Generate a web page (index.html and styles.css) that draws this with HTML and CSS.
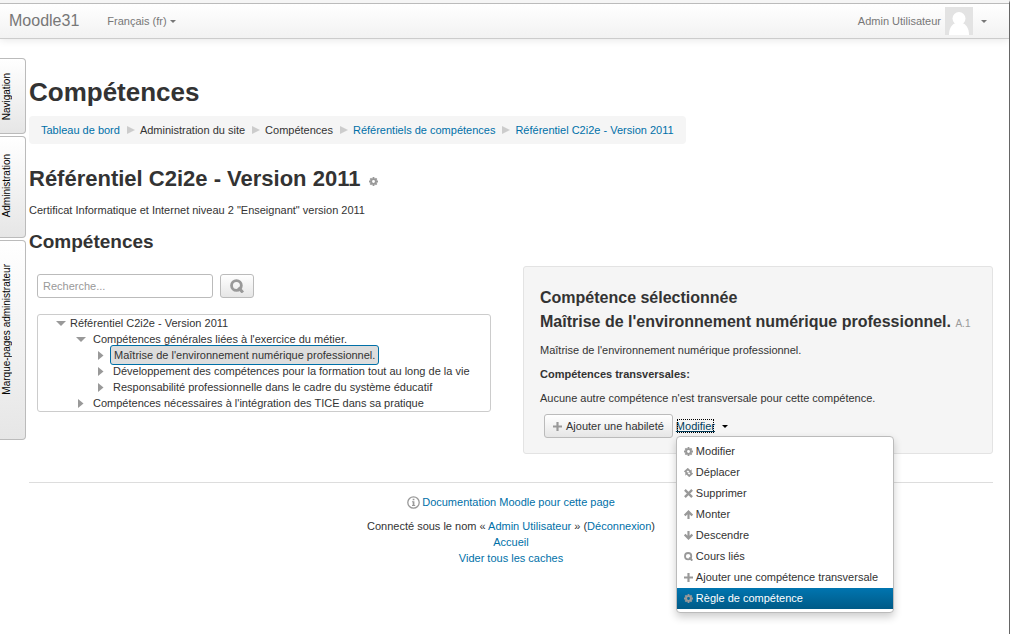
FILE: index.html
```html
<!DOCTYPE html>
<html lang="fr">
<head>
<meta charset="utf-8">
<title>Compétences</title>
<link rel="stylesheet" href="styles.css">
</head>
<body>
<svg class="symbols" aria-hidden="true">
  <symbol id="gear" viewBox="0 0 10 10"><path fill="#999" fill-rule="evenodd" d="M4 0h2v1.300l.8.3.9-.9 1.600 1.600-.9.9.3.8H10v2H8.700l-.3.8.9.9-1.600 1.600-.9-.9-.8.3V10H4V8.700l-.8-.3-.9.9L.7 7.700l.9-.9-.3-.8H0V4h1.300l.3-.8-.9-.9L2.300.7l.9.9.8-.3zM5 3.400a1.600 1.600 0 1 0 0 3.200 1.600 1.600 0 0 0 0-3.200z"/></symbol>
  <symbol id="move" viewBox="0 0 10 10"><path fill="none" stroke="#999" stroke-width="2" d="M3.400 5.400 1.400 3.800 4.200 1.200 7.600 4.400M6.600 4.600l2 1.600-2.800 2.600L2.400 5.600"/><path fill="#999" d="M4.800 5h3.700V1.500zM5.200 5H1.500v3.500z"/></symbol>
  <symbol id="cross" viewBox="0 0 10 10"><path stroke="#999" stroke-width="2.600" d="m1 1 8 8M9 1 1 9"/></symbol>
  <symbol id="up" viewBox="0 0 10 10"><path fill="none" stroke="#999" stroke-width="2.400" d="M5 10V2M.8 6 5 1.800 9.200 6"/></symbol>
  <symbol id="down" viewBox="0 0 10 10"><path fill="none" stroke="#999" stroke-width="2.400" d="M5 0v8M.8 4 5 8.200 9.200 4"/></symbol>
  <symbol id="search" viewBox="0 0 10 10"><circle cx="4.600" cy="4.600" r="3.500" fill="none" stroke="#999" stroke-width="2"/><path stroke="#999" stroke-width="2.200" d="m6 6 3.200 3.600"/></symbol>
  <symbol id="plus" viewBox="0 0 10 10"><path stroke="#999" stroke-width="2.400" d="M5 0v10M0 5h10"/></symbol>
</svg>
<header class="navbar">
  <a class="brand" href="#">Moodle31</a>
  <a class="lang" href="#">Français (fr)<i class="caret"></i></a>
  <a class="user" href="#">Admin Utilisateur
    <svg class="avatar" viewBox="0 0 28 28"><rect width="28" height="28" fill="#e3e3e3"/><circle cx="14" cy="11.500" r="6.500" fill="#fff"/><path fill="#fff" d="M4 28c0-7 3-11 7-12h6c4 1 7 5 7 12z"/></svg>
    <i class="caret"></i></a>
</header>
<div class="page">
  <nav class="dock" aria-label="Blocs">
    <button class="dock-tab"><span>Navigation</span></button>
    <button class="dock-tab tab-admin"><span>Administration</span></button>
    <button class="dock-tab tab-marks"><span>Marque-pages administrateur</span></button>
  </nav>
  <main class="content">
    <h1>Compétences</h1>
    <nav class="breadcrumb" aria-label="Fil d'Ariane">
      <a href="#">Tableau de bord</a><i class="sep"></i><span>Administration du site</span><i class="sep"></i><span>Compétences</span><i class="sep"></i><a href="#">Référentiels de compétences</a><i class="sep"></i><a href="#">Référentiel C2i2e - Version 2011</a>
    </nav>
    <h2>Référentiel C2i2e - Version 2011 <a href="#" aria-label="Modifier le référentiel"><svg class="icon"><use href="#gear"/></svg></a></h2>
    <p class="intro">Certificat Informatique et Internet niveau 2 "Enseignant" version 2011</p>
    <h3>Compétences</h3>
    <div class="columns">
      <section class="browser">
        <form class="search">
          <input type="text" placeholder="Recherche..." aria-label="Recherche">
          <button class="btn" type="button" aria-label="Rechercher"><svg class="icon-large"><use href="#search"/></svg></button>
        </form>
        <ul class="tree">
          <li class="level-1"><i class="open"></i><span>Référentiel C2i2e - Version 2011</span></li>
          <li class="level-2"><i class="open"></i><span>Compétences générales liées à l'exercice du métier.</span></li>
          <li class="level-3"><i class="closed"></i><span class="selected">Maîtrise de l'environnement numérique professionnel.</span></li>
          <li class="level-3"><i class="closed"></i><span>Développement des compétences pour la formation tout au long de la vie</span></li>
          <li class="level-3"><i class="closed"></i><span>Responsabilité professionnelle dans le cadre du système éducatif</span></li>
          <li class="level-2"><i class="closed"></i><span>Compétences nécessaires à l'intégration des TICE dans sa pratique</span></li>
        </ul>
      </section>
      <section class="well">
        <h4>Compétence sélectionnée</h4>
        <h4>Maîtrise de l'environnement numérique professionnel. <small>A.1</small></h4>
        <p>Maîtrise de l'environnement numérique professionnel.</p>
        <p class="label">Compétences transversales:</p>
        <p>Aucune autre compétence n'est transversale pour cette compétence.</p>
        <div class="actions">
          <button class="btn" type="button"><svg class="icon"><use href="#plus"/></svg>Ajouter une habileté</button>
          <div class="dropdown">
            <a class="toggle" href="#"><span>Modifier</span><i class="caret"></i></a>
            <ul class="menu">
              <li><a href="#"><svg class="icon"><use href="#gear"/></svg>Modifier</a></li>
              <li><a href="#"><svg class="icon"><use href="#move"/></svg>Déplacer</a></li>
              <li><a href="#"><svg class="icon"><use href="#cross"/></svg>Supprimer</a></li>
              <li><a href="#"><svg class="icon"><use href="#up"/></svg>Monter</a></li>
              <li><a href="#"><svg class="icon"><use href="#down"/></svg>Descendre</a></li>
              <li><a href="#"><svg class="icon"><use href="#search"/></svg>Cours liés</a></li>
              <li><a href="#"><svg class="icon"><use href="#plus"/></svg>Ajouter une compétence transversale</a></li>
              <li><a class="active" href="#"><svg class="icon"><use href="#gear"/></svg>Règle de compétence</a></li>
            </ul>
          </div>
        </div>
      </section>
    </div>
    <footer>
      <p><a class="doc" href="#"><svg class="info" viewBox="0 0 13 13"><circle cx="6.500" cy="6.500" r="5.700" fill="none" stroke="#999" stroke-width="1.300"/><path fill="#999" d="M5.700 2.700h1.700v1.500H5.700zM5 5.200h2.400v3.900H8.200v1H5v-1h.7V6.200H5z"/></svg>Documentation Moodle pour cette page</a></p>
      <div>Connecté sous le nom « <a href="#">Admin Utilisateur</a> » (<a href="#">Déconnexion</a>)</div>
      <div><a href="#">Accueil</a></div>
      <div><a href="#">Vider tous les caches</a></div>
    </footer>
  </main>
</div>
</body>
</html>
```
FILE: styles.css
```css
* { box-sizing: border-box; }
body {
  margin: 0;
  min-height: 100vh;
  border-top: 3px solid #f5f5f5;
  border-right: 1px solid #666;
  background: #fff;
  color: #333;
  font: 11px/16px "Liberation Sans", Arial, sans-serif;
}
a { color: #0070a8; text-decoration: none; }
button, input { font: inherit; color: inherit; }
h1, h2, h3, h4, p, ul { margin: 0; padding: 0; }
ul { list-style: none; }
.symbols { position: absolute; width: 0; height: 0; }
.icon { width: 9px; height: 9px; flex: none; }
.icon-large { width: 14px; height: 14px; }
.caret {
  display: inline-block;
  border: 3px solid transparent;
  border-top-color: currentColor;
  border-bottom: 0;
}

.navbar {
  display: flex;
  align-items: center;
  height: 36px;
  padding: 0 22px 0 9px;
  border-top: 1px solid #bbb;
  border-bottom: 1px solid #ccc;
  background: linear-gradient(#fff, #f2f2f2);
  box-shadow: 0 1px 8px rgba(0, 0, 0, .1);
}
.navbar a { color: #777; }
.navbar .brand { font-size: 16px; }
.lang { display: flex; align-items: center; gap: 3px; margin-left: 28px; }
.user { display: flex; align-items: center; gap: 4px; margin-left: auto; }
.user .caret { margin-left: 4px; }
.avatar { width: 28px; height: 28px; }

.page { display: flex; }
.dock { display: flex; flex-direction: column; gap: 2px; width: 29px; flex: none; padding-top: 19px; }
.dock-tab {
  display: flex;
  align-items: flex-start;
  width: 26px;
  height: 76px;
  padding: 14px 0 0 1px;
  border: 1px solid #bbb;
  border-left: 0;
  border-radius: 0 4px 4px 0;
  background: linear-gradient(#fff, #e6e6e6);
  font-size: 10px;
  line-height: 12px;
  color: #000;
}
.dock-tab span { writing-mode: vertical-rl; transform: rotate(180deg); }
.tab-admin { height: 102px; padding-top: 17px; }
.tab-marks { height: 200px; padding-top: 23px; }

.content { flex: 1; min-width: 0; padding: 33px 16px 16px 0; }
h1 { font-size: 26px; line-height: 40px; }
h2 { margin-top: 15px; font-size: 22px; line-height: 40px; }
h3 { font-size: 19px; line-height: 40px; }
h2 .icon { margin-left: 2px; }
.breadcrumb {
  display: inline-flex;
  align-items: center;
  margin-top: 4px;
  padding: 6px 12px;
  border-radius: 4px;
  background: #f5f5f5;
}
.sep { margin: 0 5px 0 7px; border: 4px solid transparent; border-left: 8px solid #ccc; border-right: 0; }
.intro { margin: 3px 0 4px; }

.columns { display: grid; grid-template-columns: 462fr 470fr; column-gap: 32px; align-items: start; margin-top: 4px; }
.browser { padding: 8px 0 0 8px; }
.search { display: flex; gap: 7px; }
.search input {
  width: 176px;
  height: 24px;
  padding: 0 5px;
  border: 1px solid #bbb;
  border-radius: 3px;
  background: #fff;
}
.search input::placeholder { color: #999; opacity: 1; }
.btn {
  display: flex;
  align-items: center;
  justify-content: center;
  gap: 4px;
  height: 24px;
  padding: 0 9px;
  border: 1px solid #bbb;
  border-radius: 3px;
  background: linear-gradient(#fff, #e6e6e6);
}
.tree { margin-top: 16px; border: 1px solid #ccc; border-radius: 3px; }
.tree li { display: flex; align-items: center; height: 16px; }
.tree i { flex: none; width: 10px; height: 10px; margin-right: 4px; background: #999; }
.open { clip-path: polygon(0 30%, 100% 30%, 50% 80%); }
.closed { clip-path: polygon(20% 10%, 75% 55%, 20% 100%); }
.tree .level-1 { padding-left: 18px; }
.tree .level-2 { padding-left: 38px; }
.tree .level-3 { padding-left: 58px; }
.tree .level-2 i, .tree .level-3 i { margin-right: 7px; }
.tree .selected {
  margin: 0 -3px;
  padding: 1px 3px;
  border: 1px solid #0070a8;
  border-radius: 3px;
  background: #ddd;
}

.well { padding: 19px 16px 15px; border: 1px solid #e3e3e3; border-radius: 3px; background: #f5f5f5; }
h4 { font-size: 16px; line-height: 24px; white-space: nowrap; }
h4 small { font-size: 10px; font-weight: normal; color: #999; }
.well p { margin-bottom: 8px; }
.well h4 + p { margin-top: 6px; }
.well .label { font-weight: bold; }
.actions { display: flex; align-items: center; gap: 3px; padding-left: 4px; }
.actions .btn { padding: 0 8px; }
.dropdown { position: relative; }
.toggle { display: flex; align-items: center; gap: 7px; color: #000; }
.toggle span { outline: 1px dotted #000; outline-offset: -2px; color: #003d5c; text-decoration: underline; }
.menu {
  position: absolute;
  top: 18px;
  left: 0;
  padding: 4px 0 3px;
  border: 1px solid #bbb;
  border-radius: 4px;
  background: #fff;
  box-shadow: 0 4px 8px rgba(0, 0, 0, .2);
}
.menu a { display: flex; align-items: center; gap: 3px; padding: 0 15px 0 7px; line-height: 21px; color: #333; white-space: nowrap; }
.menu .active { background: linear-gradient(#0075b0, #005a87); color: #fff; }

footer { margin-top: 28px; padding-top: 11px; border-top: 1px solid #ddd; text-align: center; }
footer p { display: flex; justify-content: center; margin-bottom: 8px; }
.doc { display: flex; align-items: center; gap: 2px; }
.info { width: 13px; height: 13px; }
```
